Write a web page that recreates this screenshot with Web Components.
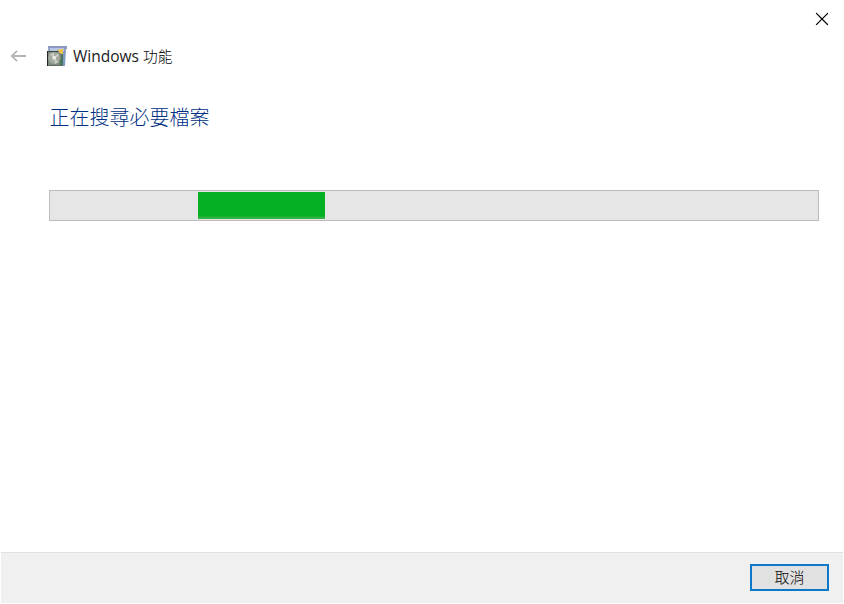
<!DOCTYPE html>
<html lang="zh-Hant">
<head>
<meta charset="utf-8">
<title>Windows 功能</title>
<style>
html,body{margin:0;height:100%;overflow:hidden;background:#fff}
</style>
</head>
<body>
<wizard-window>
  <close-button slot="controls"></close-button>
  <wizard-header slot="header">Windows <span>功能</span></wizard-header>
  <wizard-heading>正在搜尋必要檔案</wizard-heading>
  <marquee-progress></marquee-progress>
  <push-button slot="actions">取消</push-button>
</wizard-window>
<script>
function define(name, html) {
  const t = document.createElement('template');
  t.innerHTML = html;
  customElements.define(name, class extends HTMLElement {
    constructor() {
      super();
      this.attachShadow({ mode: 'open' }).append(t.content.cloneNode(true));
    }
  });
}

define('wizard-window', `
<style>
:host{box-sizing:border-box;display:grid;grid-template-rows:38px 36px 1fr 51px;width:844px;height:604px;padding:0 1px 1px;background:#fff;font-family:"Noto Sans","Noto Sans CJK TC",sans-serif;color:#1b1b1b}
.bar{display:flex;justify-content:flex-end}
main{display:flex;flex-direction:column;padding:28px 24px 0 48px}
footer{box-sizing:border-box;display:flex;justify-content:flex-end;align-items:flex-start;padding:11px 14px 0;background:#f0f0f0;border-top:1px solid #dfdfdf}
</style>
<div class="bar"><slot name="controls"></slot></div>
<slot name="header"></slot>
<main><slot></slot></main>
<footer><slot name="actions"></slot></footer>`);

define('close-button', `
<style>:host{display:flex;width:44px;height:38px}svg{display:block}</style>
<svg width="44" height="38" viewBox="0 0 44 38"><path d="M17.5 13.5l11 11M28.5 13.5l-11 11" fill="none" stroke="#000" stroke-width="1.15" stroke-linecap="square"/></svg>`);

define('app-icon', `
<style>:host{display:block;width:22px;height:22px}svg{display:block}</style>
<svg width="22" height="22" viewBox="0 0 22 22">
<path d="M2 1h19v3h-1l-1 17H3z" fill="#8a9dbb"/>
<path d="M2 1h19v2H2z" fill="#8c98c2"/>
<path d="M4 3h14v3H4z" fill="#b3c5e2"/>
<path d="M11 5h6v8h-6z" fill="#dfb557"/><path d="M13 4h4v5h-4z" fill="#f0c34e"/>
<path d="M17 6h2v14h-2z" fill="#7d9ac0"/>
<path d="M13 9h4v12h-4z" fill="#547264"/>
<path d="M1 6h12v2h2v13H1z" fill="#7f8a7f"/>
<path d="M1 6h1v15H1z" fill="#252a29"/><path d="M2 6h10v1H2z" fill="#3f4845"/><path d="M2 20h15v1H2z" fill="#626c65"/>
<ellipse cx="8" cy="13" rx="5.8" ry="6" fill="#a3aaa0"/>
<path d="M8 13L3.5 9 8 8zM8 13l5 4-4 2zM8 13l4-5 1 3z" fill="#c8ccc2"/>
<circle cx="8.2" cy="12.8" r="2" fill="#e9ebe4"/>
<path d="M14 15h2v5h-2z" fill="#3f7b54"/>
</svg>`);

define('wizard-header', `
<style>
:host{display:flex;align-items:center;height:36px;font-size:16px;line-height:24px}
.back{display:block;margin-left:9px;margin-right:19px}
.title{margin-left:5px;white-space:nowrap;font-family:"Open Sans","Noto Sans CJK TC",sans-serif;font-size:15.5px}
::slotted(span){font-family:"Noto Sans CJK TC",sans-serif;font-size:14.7px;font-weight:300;line-height:1;color:#000}
</style>
<svg class="back" width="17" height="14" viewBox="0 0 17 14"><path d="M16 7H2M7 1.8L1.8 7 7 12.2" fill="none" stroke="#b5b5b5" stroke-width="1.8"/></svg>
<app-icon></app-icon><span class="title"><slot></slot></span>`);

define('wizard-heading', `
<style>:host{display:block;height:30px;padding-left:.6px;font:300 20px/30px "Noto Sans CJK TC",sans-serif;color:#003083;white-space:nowrap}</style>
<slot></slot>`);

define('marquee-progress', `
<style>
:host{box-sizing:border-box;display:block;height:31px;margin-top:58px;padding:1px 0 1px 148px;border:1px solid #bcbcbc;background:#e6e6e6}
div{box-sizing:border-box;width:127px;height:27px;background:linear-gradient(#06b025 24px,#2ab43f 25px,#35b44a)}
</style><div></div>`);

define('push-button', `
<style>
:host{box-sizing:border-box;display:flex;justify-content:center;align-items:center;width:79px;height:27px;padding-bottom:2px;border:2px solid #0d78c8;background:#e1e1e1;font:300 15px/20px "Noto Sans CJK TC",sans-serif;color:#000}
</style><slot></slot>`);
</script>
</body>
</html>
